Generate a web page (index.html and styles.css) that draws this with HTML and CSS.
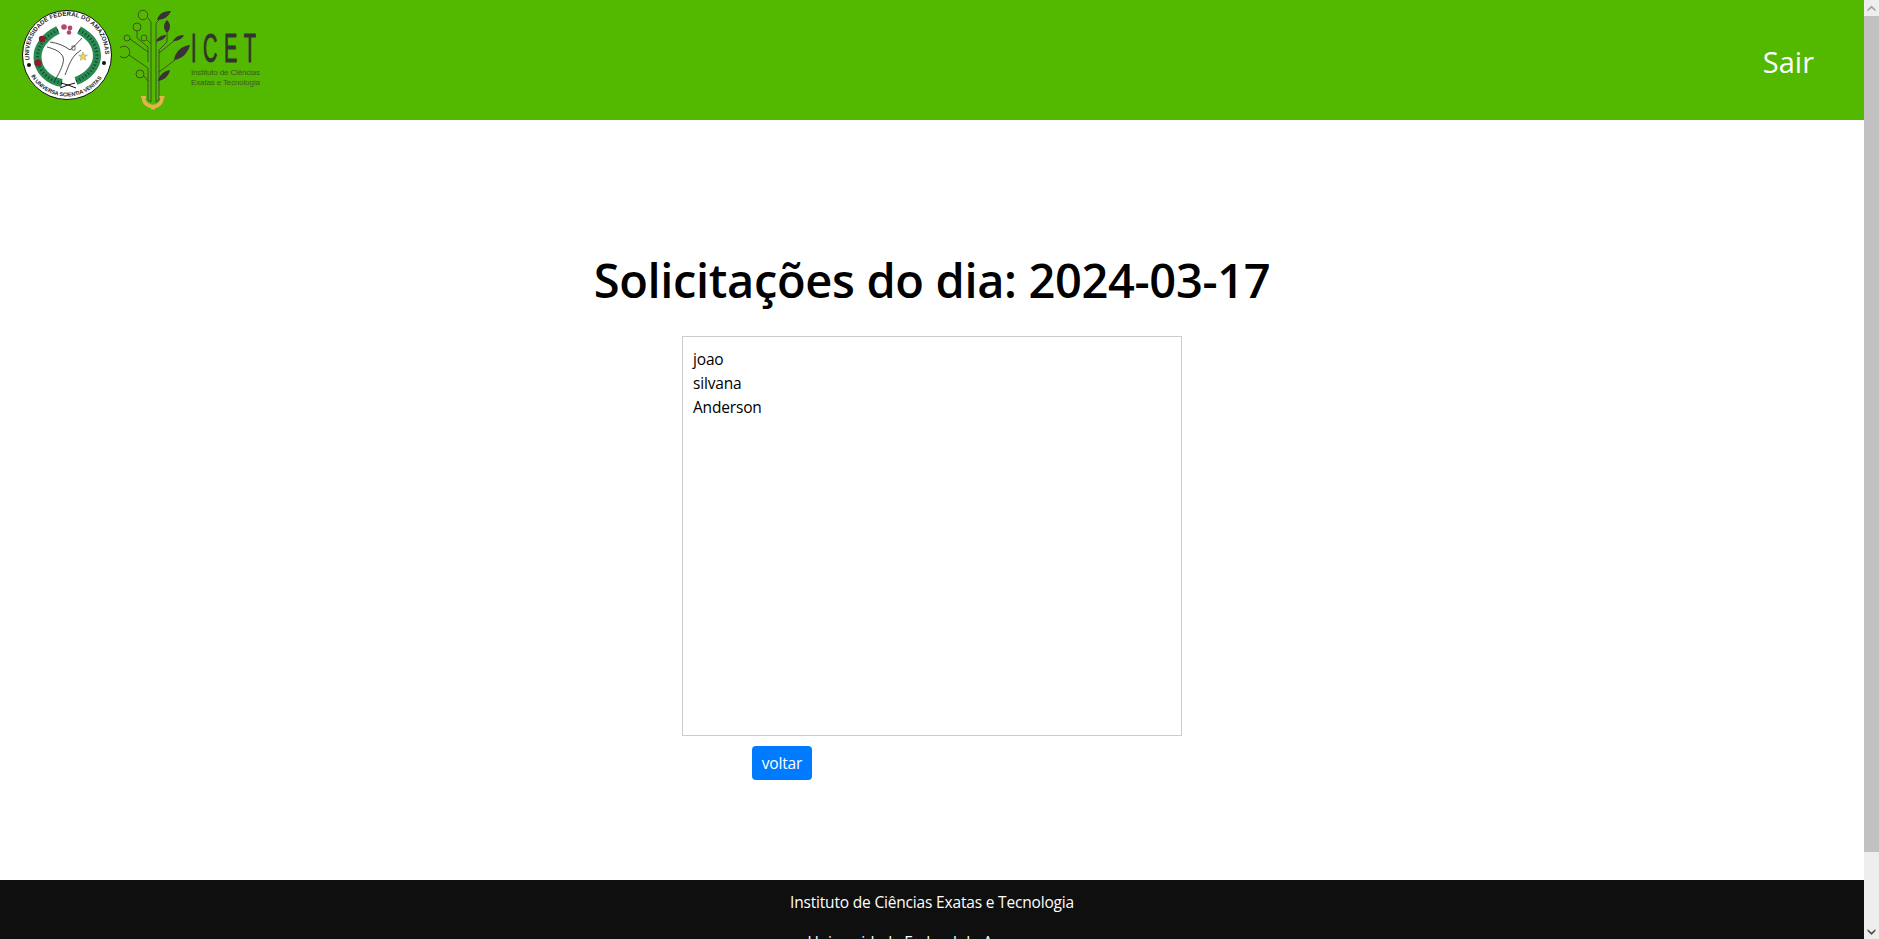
FILE: index.html
```html
<!DOCTYPE html>
<html lang="pt-BR">
<head>
    <meta charset="UTF-8">
    <meta name="viewport" content="width=device-width, initial-scale=1.0">
    <title>Solicitações do dia</title>
    <link rel="stylesheet" href="styles.css">
</head>
<body>
    <div class="page">
        <!-- Cabeçalho com os logos -->
        <div class="navbar">
            <div class="logos">
                <svg class="logo-ufam" viewBox="17 10 100 100" width="100" height="100">
                    <circle cx="67" cy="55" r="44.5" fill="#fff" stroke="#111" stroke-width="1"/>
                    <defs>
                        <path id="arco-topo" d="M29.5 60 A38 38 0 1 1 104.5 60"/>
                        <path id="arco-base" d="M31 76 A42 42 0 0 0 103 76"/>
                    </defs>
                    <text class="seal-text"><textPath href="#arco-topo" textLength="126">UNIVERSIDADE FEDERAL DO AMAZONAS</textPath></text>
                    <text class="seal-text seal-base"><textPath href="#arco-base" textLength="84">IN UNIVERSA SCIENTIA VERITAS</textPath></text>
                    <circle cx="29" cy="65" r="2" fill="#111"/>
                    <circle cx="104" cy="63" r="2" fill="#111"/>
                    <!-- coroa de folhas -->
                    <path d="M62 83 C48 81 38 70 37.5 58 C37 47 45 36 58 30" fill="none" stroke="#2a8a52" stroke-width="8"/>
                    <path d="M76 81 C89 76 97 66 97 56 C97 45 90 36 79 30" fill="none" stroke="#2a8a52" stroke-width="8"/>
                    <path d="M62 83 C48 81 38 70 37.5 58 C37 47 45 36 58 30" fill="none" stroke="#10422a" stroke-width="3" stroke-dasharray="1 2.5"/>
                    <path d="M76 81 C89 76 97 66 97 56 C97 45 90 36 79 30" fill="none" stroke="#10422a" stroke-width="3" stroke-dasharray="1 2.5"/>
                    <path d="M60 88 L68 85 L76 88 M68 85 L61 83 M68 85 L75 83" fill="none" stroke="#111" stroke-width="1"/>
                    <!-- flores -->
                    <circle cx="42" cy="39" r="3.2" fill="#8e1a2b"/>
                    <circle cx="38" cy="63" r="3.6" fill="#8e1a2b"/>
                    <circle cx="64" cy="27" r="2.8" fill="#b5476f"/>
                    <circle cx="70" cy="28" r="2.4" fill="#b5476f"/>
                    <circle cx="69" cy="32.5" r="2.3" fill="#b5476f"/>
                    <polygon points="83,52 84.2,55 87.4,55.2 84.9,57.2 85.7,60.3 83,58.6 80.3,60.3 81.1,57.2 78.6,55.2 81.8,55" fill="#f2d648" stroke="#555" stroke-width=".3"/>
                    <!-- mapa -->
                    <path d="M47 47 C55 49 61 52 63 57 C65 62 60 72 55 80" fill="none" stroke="#222" stroke-width=".8"/>
                    <path d="M50 42 C58 43 65 46 70 50 C73 47 79 42 82 38" fill="none" stroke="#222" stroke-width=".8"/>
                    <path d="M65 75 C68 68 70 60 76 54 L81 50" fill="none" stroke="#222" stroke-width=".8"/>
                    <rect x="72" y="46" width="3" height="4" fill="none" stroke="#222" stroke-width=".6"/>
                </svg>
                <svg class="logo-icet" viewBox="120 5 150 110" width="150" height="110">
                    <!-- galhos -->
                    <g fill="none" stroke="#3b4a2b" stroke-width=".9">
                        <circle cx="143" cy="15" r="4.8"/>
                        <circle cx="137" cy="27" r="4"/>
                        <circle cx="127" cy="38" r="3"/>
                        <circle cx="144" cy="38" r="3"/>
                        <circle cx="124" cy="52" r="5.8"/>
                        <circle cx="140" cy="74" r="4"/>
                        <path d="M148 18 L151 22 V102"/>
                        <path d="M159 20 L156 23 V102"/>
                        <path d="M137 31 V38 L148 47 V62"/>
                        <path d="M130 39 L148 52"/>
                        <path d="M147 40 L151 44"/>
                        <path d="M129 55 L148 68 V100 L151 102"/>
                        <path d="M144 76 L148 81"/>
                        <path d="M167 33 V42 L159 50 V100 L156 102"/>
                        <path d="M174 41 L159 53"/>
                        <path d="M175 60 L159 72"/>
                        <path d="M159 80 L162 78"/>
                        <path d="M156 43 L160 39"/>
                    </g>
                    <!-- folhas -->
                    <g fill="#3a3237">
                        <path d="M157 20 C159 13 164 11 171 11 C169 16 164 20 157 20Z"/>
                        <path d="M167 20 C171 24 171 29 167 33 C163 29 163 24 167 20Z"/>
                        <path d="M156 41 C158 37 162 35 166 35 C165 39 161 41 156 41Z"/>
                        <path d="M173 41 C175 37 179 35 184 35 C182 39 178 41 173 41Z"/>
                        <path d="M174 60 C175 52 181 46 190 45 C188 53 182 59 174 60Z"/>
                        <path d="M158 81 C159 75 164 71 170 70 C169 76 164 80 158 81Z"/>
                    </g>
                    <!-- engrenagem -->
                    <path d="M143.5 98 C144 104 149 106.5 153 106.5 C158 106.5 162 103 162 98" fill="none" stroke="#e6b24c" stroke-width="3.6"/>
                    <path d="M141 97 H146 M159.5 97 H164.5" stroke="#e6b24c" stroke-width="2"/>
                    <rect x="151" y="106" width="4" height="3.5" fill="#e6b24c"/>
                    <text class="icet-name" transform="translate(191 62) scale(.5 1)" textLength="130">ICET</text>
                    <text class="icet-sub" x="191" y="75" textLength="69">Instituto de Ciências</text>
                    <text class="icet-sub" x="191" y="85" textLength="69">Exatas e Tecnologia</text>
                </svg>
            </div>
            <a href="#" class="sair">Sair</a>
        </div>

        <div class="container">
            <h1>Solicitações do dia: 2024-03-17</h1>
            <div class="caixa">
                <div class="lista">
                    joao<br>
                    silvana<br>
                    Anderson
                </div>
                <button type="button" class="btn-voltar">voltar</button>
            </div>
        </div>

        <div class="footer">
            <p>Instituto de Ciências Exatas e Tecnologia</p>
            <p>Universidade Federal do Amazonas</p>
        </div>
    </div>

    <!-- Barra de rolagem -->
    <div class="scrollbar">
        <svg class="seta" viewBox="0 0 15 16" width="15" height="16"><path d="M3.5 9.5 L7.5 5.5 L11.5 9.5 V11.5 L7.5 8 L3.5 11.5Z" fill="#a3a3a3"/></svg>
        <div class="thumb"></div>
        <div class="trilho"></div>
        <svg class="seta" viewBox="0 0 15 16" width="15" height="16"><path d="M3.5 6 L7.5 9.5 L11.5 6 V8 L7.5 12 L3.5 8Z" fill="#505050"/></svg>
    </div>
</body>
</html>
```

FILE: styles.css
```css
html, body {
    height: 100%;
    margin: 0;
    overflow: hidden;
}
body {
    display: flex;
    font-family: "Open Sans", Arial, sans-serif;
    font-size: 15.5px;
    letter-spacing: -0.18px;
    line-height: 24px;
    background-color: #fff;
    color: #000;
}
.page {
    flex: 1;
    min-width: 0;
    overflow: hidden;
}
.navbar {
    display: flex;
    justify-content: space-between;
    align-items: center;
    height: 120px;
    padding: 0 50px 0 17px;
    background-color: #52b900;
}
.logos {
    display: flex;
    align-items: center;
    gap: 3px;
}
.seal-text {
    font-family: "Liberation Sans", Arial, sans-serif;
    font-size: 6px;
    font-weight: 700;
    letter-spacing: 0;
    fill: #222;
}
.seal-base {
    font-size: 5.5px;
}
.icet-name {
    font-family: "Liberation Sans", Arial, sans-serif;
    font-size: 40px;
    letter-spacing: 0;
    fill: #33342f;
    stroke: #33342f;
    stroke-width: 1px;
}
.icet-sub {
    font-family: "Liberation Sans", Arial, sans-serif;
    font-size: 8px;
    letter-spacing: 0;
    fill: #3f5a22;
}
.sair {
    padding-top: 3px;
    color: #fff;
    font-size: 29px;
    line-height: 36px;
    letter-spacing: 0;
    text-decoration: none;
}
.container {
    height: 760px;
    padding-top: 129px;
    box-sizing: border-box;
}
h1 {
    margin: 0 0 25px;
    font-size: 47px;
    line-height: 62px;
    letter-spacing: -0.35px;
    font-weight: 600;
    text-align: center;
}
.caixa {
    width: 500px;
    margin: 0 auto;
}
.lista {
    box-sizing: border-box;
    height: 400px;
    padding: 10px;
    border: 1px solid #ccc;
}
.btn-voltar {
    display: block;
    margin: 10px 0 0 70px;
    width: 60px;
    height: 34px;
    padding: 0;
    background-color: #007bff;
    color: #fff;
    border: none;
    border-radius: 4px;
    font: inherit;
    letter-spacing: inherit;
    cursor: pointer;
}
.footer {
    padding: 10px 0;
    background-color: #0f0f0f;
    color: #fff;
    text-align: center;
}
.footer p {
    margin: 0 0 16px;
}
.scrollbar {
    display: flex;
    flex-direction: column;
    flex: 0 0 15px;
    height: 100%;
    background-color: #eee;
}
.seta {
    flex: 0 0 16px;
    display: block;
}
.thumb {
    height: 836px;
    background-color: #c1c1c1;
}
.trilho {
    flex: 1;
}
```
